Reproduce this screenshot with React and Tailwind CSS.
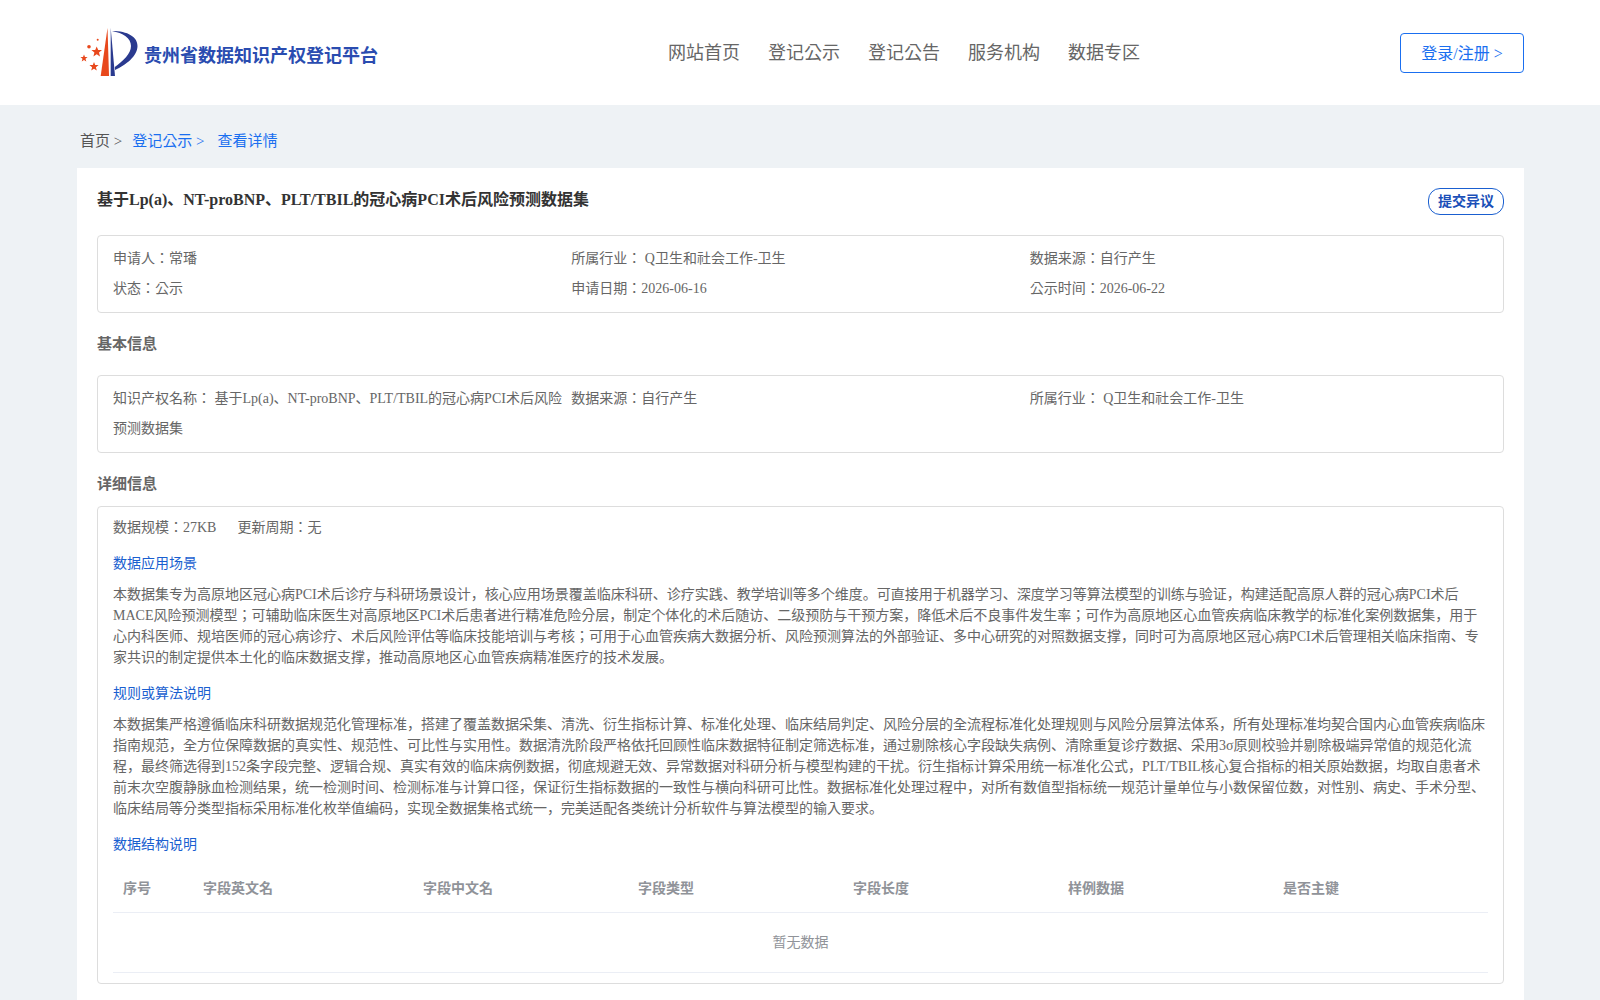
const font = "font-['Liberation_Serif','Noto_Sans_CJK_KR',serif]";

function Logo() {
  return (
    <svg width="60" height="52" viewBox="80 28 60 52" className="shrink-0">
      <path d="M107.5 29 L109 77 L100.7 77 Z" fill="#e8481c" />
      <path d="M110.7 29 L115 77 L110.7 77 Z" fill="#2a3a8f" />
      <path d="M112 32 C128 32 137.5 38 137.5 47 C137.5 57 126 66 115 71 L114.8 68 C123 62 131 55 131 47 C131 39 123 34 112 32 Z" fill="#2a3a8f" />
      <g fill="#e8481c">
        <polygon points="96.7,47.5 98.2,51 102,51 99,53.6 100,57.5 96.7,55.3 93.4,57.5 94.4,53.6 91.4,51 95.2,51" />
        <polygon points="84,55.5 85,58 87.6,58 85.5,59.8 86.3,62.4 84,60.9 81.7,62.4 82.5,59.8 80.4,58 83,58" />
        <polygon points="94,63 95.2,66 98.6,66 95.9,68.2 96.8,71.6 94,69.7 91.2,71.6 92.1,68.2 89.4,66 92.8,66" />
        <circle cx="89" cy="47.7" r="1.8" />
        <circle cx="97.7" cy="40.7" r="1" />
      </g>
    </svg>
  );
}

function Header() {
  return (
    <header className="flex h-[105px] items-center bg-white pl-[80px] pr-[76px]">
      <div className="flex w-[588px] items-center">
        <Logo />
        <span className="ml-[4px] mt-[8px] text-[18px] font-bold text-[#2a4cb0]">贵州省数据知识产权登记平台</span>
      </div>
      <nav className="flex gap-[28px] pt-[2px] text-[18px] text-[#666666]">
        <span>网站首页</span>
        <span>登记公示</span>
        <span>登记公告</span>
        <span>服务机构</span>
        <span>数据专区</span>
      </nav>
      <button className="ml-auto h-[40px] w-[124px] rounded-[4px] border border-[#1a6ff0] pt-[2px] text-[16px] text-[#1a6ff0]">登录/注册 &gt;</button>
    </header>
  );
}

function Section({ children }) {
  return <div className="text-[14px] leading-[21px] text-[#1a5fd0]">{children}</div>;
}

function Para({ children }) {
  return <p className="mt-[10px] text-[14px] leading-[21px] text-[#666666]">{children}</p>;
}

const columns = ["序号", "字段英文名", "字段中文名", "字段类型", "字段长度", "样例数据", "是否主键"];

export default function App() {
  return (
    <div className={`${font} min-h-[1000px] bg-[#eef2f5] text-[14px] text-[#666666]`}>
      <Header />
      <div className="flex h-[63px] items-center pt-[10px] pl-[80px] text-[15px]">
        <span className="text-[#555555]">首页 &gt;</span>
        <span className="ml-[10px] text-[#1a6ff0]">登记公示 &gt;</span>
        <span className="ml-[13px] text-[#1a6ff0]">查看详情</span>
      </div>
      <main className="ml-[77px] mr-[76px] bg-white px-[20px] pt-[20px] pb-[30px]">
        <div className="flex h-[27px] items-start justify-between">
          <h1 className="text-[16px] font-bold leading-[24px] text-[#333333]">基于Lp(a)、NT-proBNP、PLT/TBIL的冠心病PCI术后风险预测数据集</h1>
          <button className="h-[27px] w-[76px] rounded-[12px] border border-[#1a5fd0] text-[14px] font-bold text-[#1a4fb8]">提交异议</button>
        </div>

        <div className="mt-[20px] grid h-[78px] grid-cols-3 content-center rounded-[4px] border border-[#dddddd] px-[15px] leading-[30px]">
          <span>申请人：常璠</span>
          <span>所属行业： Q卫生和社会工作-卫生</span>
          <span>数据来源：自行产生</span>
          <span>状态：公示</span>
          <span>申请日期：2026-06-16</span>
          <span>公示时间：2026-06-22</span>
        </div>

        <h2 className="mt-[21px] text-[15px] font-bold leading-[21px] text-[#666666]">基本信息</h2>

        <div className="mt-[20px] grid h-[78px] grid-cols-3 content-center rounded-[4px] border border-[#dddddd] px-[15px] leading-[30px]">
          <span>知识产权名称： 基于Lp(a)、NT-proBNP、PLT/TBIL的冠心病PCI术后风险预测数据集</span>
          <span>数据来源：自行产生</span>
          <span>所属行业： Q卫生和社会工作-卫生</span>
        </div>

        <h2 className="mt-[21px] text-[15px] font-bold leading-[21px] text-[#666666]">详细信息</h2>

        <div className="mt-[11px] h-[478px] rounded-[4px] border border-[#dddddd] px-[15px] pt-[10px]">
          <div className="flex gap-[21px] leading-[21px]">
            <span>数据规模：27KB</span>
            <span>更新周期：无</span>
          </div>
          <div className="mt-[15px]"><Section>数据应用场景</Section></div>
          <Para>本数据集专为高原地区冠心病PCI术后诊疗与科研场景设计，核心应用场景覆盖临床科研、诊疗实践、教学培训等多个维度。可直接用于机器学习、深度学习等算法模型的训练与验证，构建适配高原人群的冠心病PCI术后MACE风险预测模型；可辅助临床医生对高原地区PCI术后患者进行精准危险分层，制定个体化的术后随访、二级预防与干预方案，降低术后不良事件发生率；可作为高原地区心血管疾病临床教学的标准化案例数据集，用于心内科医师、规培医师的冠心病诊疗、术后风险评估等临床技能培训与考核；可用于心血管疾病大数据分析、风险预测算法的外部验证、多中心研究的对照数据支撑，同时可为高原地区冠心病PCI术后管理相关临床指南、专家共识的制定提供本土化的临床数据支撑，推动高原地区心血管疾病精准医疗的技术发展。</Para>
          <div className="mt-[15px]"><Section>规则或算法说明</Section></div>
          <Para>本数据集严格遵循临床科研数据规范化管理标准，搭建了覆盖数据采集、清洗、衍生指标计算、标准化处理、临床结局判定、风险分层的全流程标准化处理规则与风险分层算法体系，所有处理标准均契合国内心血管疾病临床指南规范，全方位保障数据的真实性、规范性、可比性与实用性。数据清洗阶段严格依托回顾性临床数据特征制定筛选标准，通过剔除核心字段缺失病例、清除重复诊疗数据、采用3σ原则校验并剔除极端异常值的规范化流程，最终筛选得到152条字段完整、逻辑合规、真实有效的临床病例数据，彻底规避无效、异常数据对科研分析与模型构建的干扰。衍生指标计算采用统一标准化公式，PLT/TBIL核心复合指标的相关原始数据，均取自患者术前末次空腹静脉血检测结果，统一检测时间、检测标准与计算口径，保证衍生指标数据的一致性与横向科研可比性。数据标准化处理过程中，对所有数值型指标统一规范计量单位与小数保留位数，对性别、病史、手术分型、临床结局等分类型指标采用标准化枚举值编码，实现全数据集格式统一，完美适配各类统计分析软件与算法模型的输入要求。</Para>
          <div className="mt-[15px]"><Section>数据结构说明</Section></div>

          <div className="mt-[10px]">
            <div className="grid h-[48px] grid-cols-[80px_220px_215px_215px_215px_215px_1fr] items-center border-b border-[#ebeef5] text-[14px] font-bold text-[#909399]">
              {columns.map((c) => (
                <span key={c} className="pl-[10px]">{c}</span>
              ))}
            </div>
            <div className="flex h-[60px] items-center justify-center border-b border-[#ebeef5] text-[14px] text-[#909399]">暂无数据</div>
          </div>
        </div>
      </main>
    </div>
  );
}
